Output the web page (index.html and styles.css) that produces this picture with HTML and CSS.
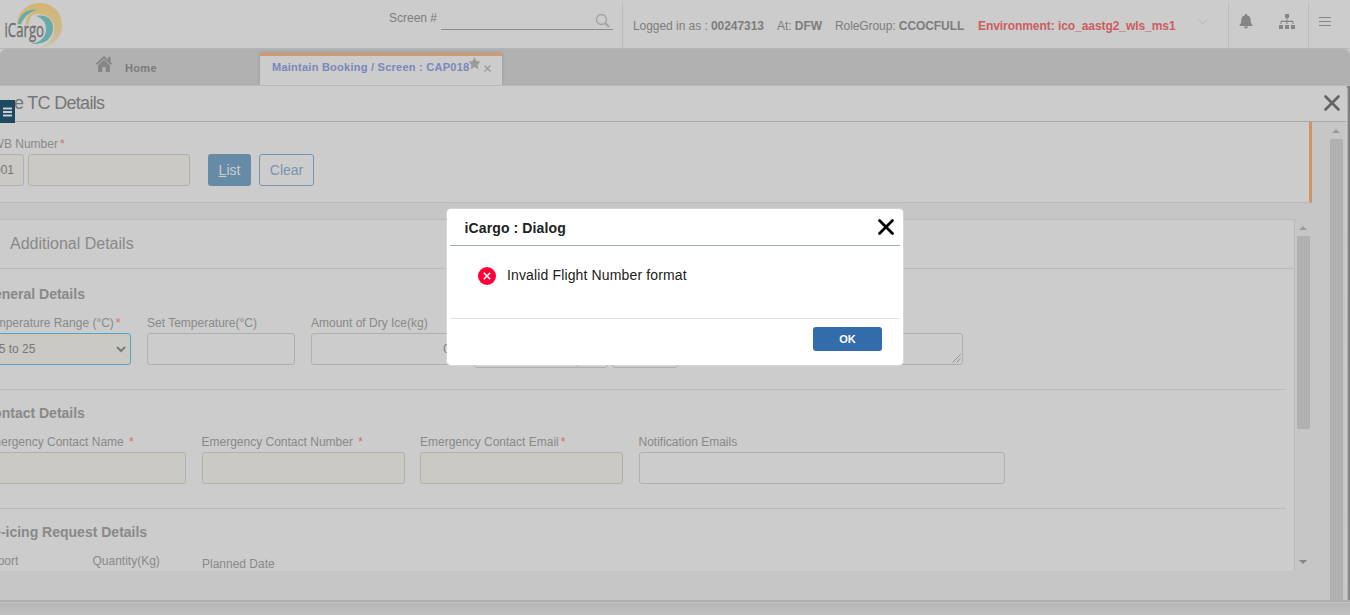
FILE: index.html
```html
<!DOCTYPE html>
<html lang="en">
<head>
<meta charset="utf-8">
<title>iCargo</title>
<link rel="stylesheet" href="styles.css">
</head>
<body>
<header class="top">
  <svg class="logo" width="70" height="48" viewBox="0 0 70 48">
    <defs><linearGradient id="gold" x1="0" y1="0" x2="0" y2="1"><stop offset="0" stop-color="#d2b676"/><stop offset=".65" stop-color="#cfb988"/><stop offset="1" stop-color="#ccc3ac"/></linearGradient></defs>
    <path fill="url(#gold)" d="M17 24C18 10 29 3 40 3C53 3 62 13 62 25C62 38 52 47 40 47.500C50 44 55 36 54 27C53 18 46 14 37 14C32 14 29 18 29 24L26 25C25 19 28 14 33 11C26 12 21 17 20 25Z"/>
    <path fill="#67aaa9" d="M18 24C19 14 27 9 37 9.500C31 12 25 15 21 24ZM36 16C46 14 53 19 53 28C53 39 44 45 31 44C41 42 46 37 46 29C46 22 42 18 36 16Z"/>
    <text class="logo-text" x="4.500" y="36.500" textLength="39.500" lengthAdjust="spacingAndGlyphs">iCargo</text>
  </svg>
  <div class="screen-search">
    <span>Screen #</span>
    <div class="search-line"><svg width="16" height="16" viewBox="0 0 16 16" fill="none" stroke="#a2a2a2"><circle cx="6.500" cy="6.500" r="5" stroke-width="1.300"/><path d="M10.300 10.300L14 14" stroke-width="2"/></svg></div>
  </div>
  <div class="session">
    <span class="who">Logged in as : <b>00247313</b></span>
    <span class="at">At: <b>DFW</b></span>
    <span class="role">RoleGroup: <b>CCOCFULL</b></span>
    <span class="env">Environment: ico_aastg2_wls_ms1</span>
    <svg class="chevron" width="10" height="6" viewBox="0 0 10 6" fill="none" stroke="#b4b4b4"><path d="M1 .7L5 4.700L9 .7"/></svg>
  </div>
  <div class="alerts">
    <svg width="14" height="15" viewBox="0 0 14 15" fill="#858585"><path d="M6 0h2v1.300C11 2 11.700 4 11.700 6.500C11.700 9 12.300 10 13.500 11V12H.5V11C1.700 10 2.300 9 2.300 6.500C2.300 4 3 2 6 1.300ZM5 12.500h4C9 15 5 15 5 12.500Z"/></svg>
    <svg width="16" height="15" viewBox="0 0 16 15" fill="#858585"><path d="M6 0h4v4H6zM0 11h4v4H0zM6 11h4v4H6zM12 11h4v4h-4zM7.500 4h1v6h-1zM2 6.800h12v1.200H2zM1.500 7h1v3h-1zM13.500 7h1v3h-1z"/></svg>
  </div>
  <div class="burger"><svg width="12" height="10" viewBox="0 0 12 10" stroke="#858585"><path d="M0 .5h12M0 4.500h12M0 8.500h12"/></svg></div>
</header>

<nav class="tabs">
  <div class="home">
    <svg width="16" height="17" viewBox="0 0 16 17" fill="#858585"><path d="M8 0L0 7.500L1.200 9L8 2.500L14.800 9L16 7.500L14.500 6V1H12V3.700Z"/><path d="M8 3.800L2 9.500V16H6.300V11H9.700V16H14V9.500Z"/></svg>
    <span>Home</span>
  </div>
  <div class="tab">
    <span>Maintain Booking / Screen : CAP018</span>
    <svg class="star" width="13" height="13" viewBox="0 0 13 13" fill="#9b9b9b"><path d="M6.500 0L8.300 4L12.500 4.700L9.500 7.700L10.500 12.300L6.500 10L2.500 12.300L3.500 7.700L.5 4.700L4.700 4Z"/></svg>
    <svg class="tab-close" width="7" height="7" viewBox="0 0 7 7" stroke="#9b9b9b" stroke-width="1.400"><path d="M.5 .5L6.500 6.500M6.500 .5L.5 6.500"/></svg>
  </div>
</nav>

<div class="frame">
  <div class="window">
    <div class="title">
      <h1>e TC Details</h1>
      <svg width="18" height="18" viewBox="0 0 18 18" stroke="#646464" stroke-width="2.700" stroke-linecap="round"><path d="M2.500 2.500L15.500 15.500M15.500 2.500L2.500 15.500"/></svg>
    </div>
    <div class="viewport">
      <main class="main">
        <section class="filter">
          <label class="label">AWB Number<i>*</i></label>
          <div class="filter-row">
            <div class="input prefix required">001</div>
            <div class="input awb required"></div>
            <div class="btn list"><u>L</u>ist</div>
            <div class="btn clear">Clear</div>
          </div>
        </section>
        <div class="details">
          <div class="panel">
            <h2>Additional Details</h2>
            <section class="section general">
              <h3>General Details</h3>
              <div class="row">
                <div class="field w148"><label class="label">Temperature Range (°C)<i>*</i></label>
                  <div class="input required select"><span>15 to 25</span><svg width="10" height="7" viewBox="0 0 10 7" fill="none" stroke="#777a7b" stroke-width="2"><path d="M1 1L5 5L9 1"/></svg></div></div>
                <div class="field w148"><label class="label">Set Temperature(°C)</label><div class="input"></div></div>
                <div class="field w148"><label class="label">Amount of Dry Ice(kg)</label><div class="input amount">0.0</div></div>
                <div class="lowered"><div class="input date"><span></span></div><div class="input time"></div></div>
                <div class="field remarks"><label class="label">&nbsp;</label>
                  <div class="input area"><svg width="9" height="9" viewBox="0 0 9 9" stroke="#929292"><path d="M.5 8.500L8.500 .5M4.500 8.500L8.500 4.500"/></svg></div></div>
              </div>
            </section>
            <section class="section">
              <h3>Contact Details</h3>
              <div class="row contact">
                <div class="field w203"><label class="label">Emergency Contact Name <i>*</i></label><div class="input required"></div></div>
                <div class="field w203"><label class="label">Emergency Contact Number <i>*</i></label><div class="input required"></div></div>
                <div class="field w203"><label class="label">Emergency Contact Email<i>*</i></label><div class="input required"></div></div>
                <div class="field w366"><label class="label">Notification Emails</label><div class="input"></div></div>
              </div>
            </section>
            <section class="section last">
              <h3>Re-icing Request Details</h3>
              <div class="row icing"><span class="label">Airport</span><span class="label">Quantity(Kg)</span><span class="label planned">Planned Date</span></div>
            </section>
          </div>
          <div class="scroll inner"><b class="up"></b><div class="thumb"></div><b class="down"></b></div>
        </div>
      </main>
      <div class="scroll outer"><b class="up"></b><div class="thumb"></div></div>
    </div>
  </div>
</div>
<footer class="foot"></footer>

<div class="side-toggle"><svg width="9" height="10" viewBox="0 0 9 10" stroke="#c7cfd2" stroke-width="1.800"><path d="M0 1.500h9M0 5h9M0 8.500h9"/></svg></div>

<div class="dialog">
  <div class="dialog-head"><span>iCargo : Dialog</span>
    <svg width="18" height="18" viewBox="0 0 18 18" stroke="#000" stroke-width="2.800" stroke-linecap="round"><path d="M2.500 2.500L15.500 15.500M15.500 2.500L2.500 15.500"/></svg></div>
  <div class="dialog-body">
    <svg width="18" height="18" viewBox="0 0 18 18"><circle cx="9" cy="9" r="9" fill="#ff0036"/><path d="M5.800 5.800L12.200 12.200M12.200 5.800L5.800 12.200" stroke="#fff" stroke-width="1.600"/></svg>
    <span>Invalid Flight Number format</span></div>
  <div class="dialog-foot"><div class="ok">OK</div></div>
</div>
</body>
</html>
```

FILE: styles.css
```css
* { box-sizing: border-box; }
body { margin: 0; width: 1350px; height: 615px; overflow: hidden; background: #ccc; color: #858585; font: 12px "Liberation Sans", Arial, sans-serif; position: relative; }
svg { display: block; flex: none; }
h1, h2, h3 { margin: 0; white-space: nowrap; }
.top { height: 49px; display: flex; border-bottom: 1px solid #b6b6b6; color: #7d7d7d; }
.logo-text { font: 20px "Open Sans", sans-serif; fill: #6f6f6f; stroke: #6f6f6f; stroke-width: .4px; }
.screen-search { width: 553px; padding: 9px 10px 0 319px; display: flex; line-height: 18px; white-space: nowrap; background: repeating-linear-gradient(#aeaeae 0 1px, transparent 1px 2px) right 3px / 1px 45px no-repeat; }
.search-line { width: 172px; height: 21px; margin-left: 4px; border-bottom: 1px solid #8c8c8c; display: flex; justify-content: flex-end; padding: 4px 2px 0 0; }
.session { width: 605px; display: flex; align-items: center; padding: 3px 0 0 10px; white-space: nowrap; }
.who { width: 144px; letter-spacing: -.05px; }
.at { width: 58px; letter-spacing: -.05px; }
.role { width: 143px; letter-spacing: -.08px; }
.env { width: 220px; font-weight: bold; color: #cb5d60; letter-spacing: -.06px; }
.chevron { margin-top: -8px; }
.alerts { width: 81px; display: flex; gap: 26px; padding: 14px 0 0 11px; background: repeating-linear-gradient(#aeaeae 0 1px, transparent 1px 2px) left 3px / 1px 45px no-repeat, repeating-linear-gradient(#aeaeae 0 1px, transparent 1px 2px) right 3px / 1px 45px no-repeat; }
.burger { padding: 17px 0 0 10px; }
.tabs { height: 37px; display: flex; background: #b1b1b1; border-bottom: 1px solid #b9b9b9; border-radius: 6px 6px 0 0; font-weight: bold; }
.home { width: 260px; display: flex; padding: 7px 0 0 96px; font-size: 11px; letter-spacing: .35px; color: #7b7b7b; }
.home span { margin: 6px 0 0 13px; }
.tab { width: 242px; height: 33px; margin-top: 4px; padding: 5px 0 0 12px; display: flex; background: #ccc; border-top: 3px solid #d19a70; box-shadow: 0 0 4px rgba(0,0,0,.15); font-size: 11px; line-height: 13px; letter-spacing: .25px; color: #7a87bb; white-space: nowrap; clip-path: inset(-4px -4px 1px -4px); }
.star { margin-top: -4px; margin-left: -1px; }
.tab-close { margin: 4px 0 0 3px; }
.frame { height: 514px; margin-top: -1px; height: 515px; padding: 1px 2px 0 0; background: linear-gradient(#7f7f7f, #8d8d8d) right / 3px 514px no-repeat; background-position: right 1px; }
.window { height: 514px; background: #ccc; border-right: 1px solid #b0b0b0; border-radius: 0 4px 0 0; overflow: hidden; }
.title { height: 36px; margin-right: 1px; display: flex; justify-content: space-between; align-items: center; border-bottom: 1px solid #a9a9a9; padding: 0 5px 2px 14px; }
.title h1 { padding-top: 1px; font-size: 18px; font-weight: normal; letter-spacing: -.7px; color: #777; }
.viewport { height: 478px; margin-right: 2px; display: flex; background: #c6c6c6; }
.main { width: 1312px; overflow: hidden; }
.filter { height: 81px; padding: 14px 0 0; background: #ccc; border-right: 3px solid #d09268; border-bottom: 1px solid #bbb; }
.filter .label { margin-left: -15px; height: 18px; }
.label { display: block; line-height: 16px; color: #898989; white-space: nowrap; }
.label i { font-style: normal; color: #cc6c70; margin-left: 2px; }
.filter-row { display: flex; }
.input { height: 32px; border: 1px solid #b0b0b0; border-radius: 3px; line-height: 30px; color: #777; white-space: nowrap; }
.required { background: #cac9c3; }
.prefix { width: 41px; margin-left: -17px; padding-left: 10px; }
.awb { width: 162px; margin: 0 18px 0 4px; }
.btn { height: 32px; border-radius: 3px; line-height: 32px; text-align: center; font-size: 14px; }
.list { width: 43px; margin-right: 8px; background: #668ba7; color: #ccc; }
.clear { width: 55px; border: 1px solid #7893b2; line-height: 30px; color: #7893b2; }
.details { display: flex; height: 352px; margin-top: 16px; }
.panel { width: 1295px; height: 352px; overflow: hidden; background: #ccc; border: 1px solid #bbb; border-width: 1px 1px 0 0; }
.panel h2 { height: 49px; padding-left: 10px; border-bottom: 1px solid #bbb; font-size: 16px; font-weight: normal; line-height: 48px; color: #898989; }
.section { height: 119px; margin: 0 8px 0 0; padding: 14px 0 0; border-bottom: 1px solid #bbb; }
.general { height: 121px; padding-top: 16px; }
.section h3 { height: 30px; margin-left: -17px; font-size: 14px; line-height: 18px; color: #898989; }
.row { display: flex; margin-left: -17px; gap: 16px; }
.label { flex: none; }
.general .label { height: 18px; }
.contact { gap: 15.500px; }
.contact .label { height: 18px; line-height: 17px; }
.w148 { width: 148px; flex: none; } .w203 { width: 203px; } .w366 { width: 366px; }
.select { display: flex; align-items: center; justify-content: space-between; border-color: #5ca0c4; padding: 0 4px 0 8px; }
.amount { text-align: right; padding-right: 0; margin-right: -2px; }
.lowered { display: flex; gap: 4px; margin: 21px 0 0 -1px; }
.date { width: 134px; padding-left: 102px; }
.date span { display: block; height: 30px; border-left: 1px solid #b0b0b0; }
.time { width: 66px; }
.remarks { width: 270px; margin-left: -1px; }
.area { display: flex; justify-content: flex-end; align-items: flex-end; padding: 0 1px 1px 0; }
.last { border: 0; }
.icing { gap: 0; }
.icing .label { width: 109.500px; }
.icing .planned { padding-top: 3px; }
.scroll { display: flex; flex-direction: column; align-items: center; }
.inner { width: 13px; margin-left: 2px; }
.outer { width: 33px; padding-left: 16px; }
.scroll .thumb { width: 13px; background: #b1b1b1; }
.inner .thumb { height: 193px; margin-top: 6px; }
.outer .thumb { width: 13px; height: 461px; margin: 6px 0 0 -1px; }
.up { border: 4px solid transparent; border-top: 0; border-bottom-color: #9b9b9b; margin: 7px 1px 0 0; }
.down { border: 4px solid transparent; border-bottom: 0; border-top-color: #858585; margin: 131px 1px 0 0; }
.foot { height: 15px; border-top: 2px solid #aeaeae; box-shadow: inset 0 1px #c4c4c4; background: linear-gradient(#b4b4b4, #c1c1c1); }
.side-toggle { position: absolute; left: 0; top: 100px; width: 15px; height: 23px; background: #1d4a60; padding: 7px 0 0 3px; }
.dialog { position: absolute; left: 447px; top: 209px; width: 456px; height: 156px; padding: 0 3px; border-radius: 4px; background: #fff; color: #212121; box-shadow: 0 0 1px 1px rgba(255,255,255,.25); }
.dialog-head { height: 37px; display: flex; align-items: center; justify-content: space-between; padding: 0 5px 0 14px; border-bottom: 1px solid #9fafba; font-size: 14px; font-weight: bold; letter-spacing: .12px; }
.dialog-head span { padding: 2px 0 0 .5px; }
.dialog-body { height: 73px; display: flex; padding: 21px 0 0 28px; font-size: 14px; border-bottom: 1px solid #e0e4e6; }
.dialog-body span { margin-left: 11px; line-height: 16px; letter-spacing: .14px; }
.dialog-foot { display: flex; justify-content: flex-end; padding: 8px 18px 0 0; }
.ok { width: 69px; height: 24px; border-radius: 3px; background: #336cab; color: #fff; font-size: 11px; font-weight: bold; line-height: 24px; text-align: center; }
```
